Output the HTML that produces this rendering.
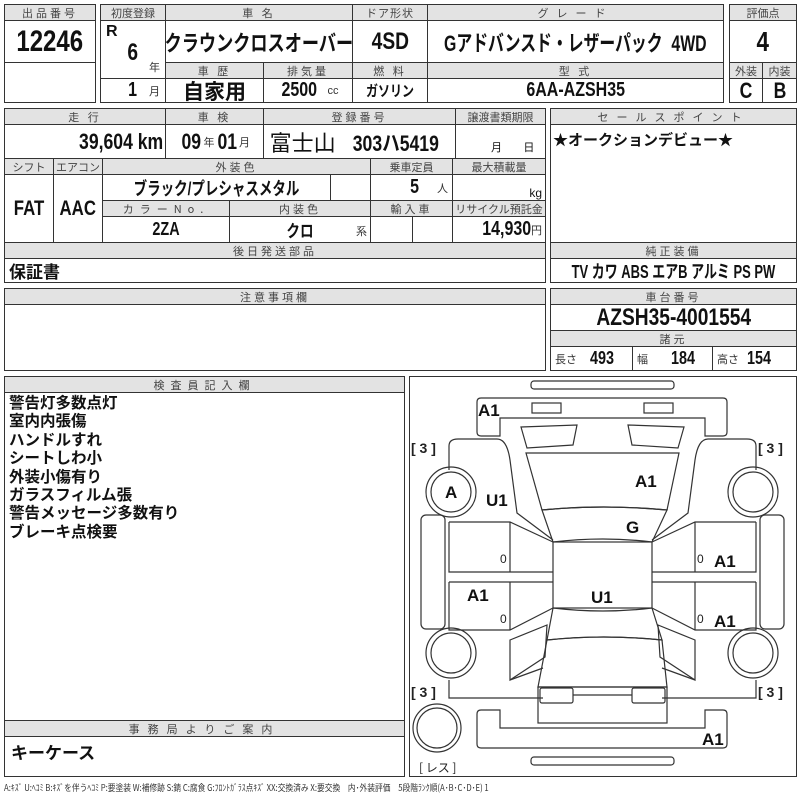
<!DOCTYPE html>
<html><head><meta charset="utf-8"><style>
*{box-sizing:border-box;margin:0;padding:0}
body{width:800px;height:800px;background:#fff;position:relative;overflow:hidden;font-family:"Liberation Sans","Noto Sans CJK JP",sans-serif;color:#111}
.c,.h{position:absolute;border:1px solid #333;display:flex;align-items:center;justify-content:center;white-space:nowrap;overflow:hidden}
.h{background:#e3e3e3;font-size:11px;color:#444;letter-spacing:3px;font-family:"Noto Sans CJK JP",sans-serif}
.b{font-weight:bold;font-family:"Liberation Sans","Noto Sans CJK JP",sans-serif}
.n{display:inline-block;transform:scaleX(.8)}
.s{font-size:11px;font-weight:normal;color:#333}
</style></head><body>

<div class="h" style="left:4px;top:4px;width:92px;height:17px">出品番号</div>
<div class="c b" style="left:4px;top:20px;width:92px;height:43px;font-size:30px"><span class="n">12246</span></div>
<div class="c" style="left:4px;top:62px;width:92px;height:41px"></div>

<div class="h" style="left:100px;top:4px;width:66px;height:17px;letter-spacing:0">初度登録</div>
<div class="h" style="left:165px;top:4px;width:188px;height:17px">車 名</div>
<div class="h" style="left:352px;top:4px;width:76px;height:17px;letter-spacing:1px">ドア形状</div>
<div class="h" style="left:427px;top:4px;width:297px;height:17px;letter-spacing:8px">グレード</div>
<div class="c b" style="left:100px;top:20px;width:66px;height:59px;font-size:24px"><span style="position:absolute;left:5px;top:2px;font-size:16px">R</span><span class="n" style="margin-top:6px">6</span><span class="s" style="position:absolute;right:5px;bottom:3px">年</span></div>
<div class="c b" style="left:165px;top:20px;width:188px;height:43px;font-size:22px"><span class="n" style="transform:scaleX(.78)">クラウンクロスオーバー</span></div>
<div class="c b" style="left:352px;top:20px;width:76px;height:43px;font-size:24px"><span class="n">4SD</span></div>
<div class="c b" style="left:427px;top:20px;width:297px;height:43px;font-size:22px"><span class="n" style="transform:scaleX(.72)">Gアドバンスド・レザーパック&nbsp; 4WD</span></div>
<div class="h" style="left:165px;top:62px;width:99px;height:17px">車 歴</div>
<div class="h" style="left:263px;top:62px;width:90px;height:17px">排気量</div>
<div class="h" style="left:352px;top:62px;width:76px;height:17px">燃 料</div>
<div class="h" style="left:427px;top:62px;width:297px;height:17px">型 式</div>
<div class="c b" style="left:100px;top:78px;width:66px;height:25px;font-size:20px;justify-content:flex-end;padding-right:5px"><span class="n">1</span>&nbsp;&nbsp;<span class="s">月</span></div>
<div class="c b" style="left:165px;top:78px;width:99px;height:25px;font-size:21px">自家用</div>
<div class="c b" style="left:263px;top:78px;width:90px;height:25px;font-size:20px"><span class="n">2500</span>&nbsp;<span class="s">cc</span></div>
<div class="c b" style="left:352px;top:78px;width:76px;height:25px;font-size:15px"><span class="n">ガソリン</span></div>
<div class="c b" style="left:427px;top:78px;width:297px;height:25px;font-size:20px"><span class="n">6AA-AZSH35</span></div>

<div class="h" style="left:729px;top:4px;width:68px;height:17px;letter-spacing:0">評価点</div>
<div class="c b" style="left:729px;top:20px;width:68px;height:43px;font-size:28px"><span class="n">4</span></div>
<div class="h" style="left:729px;top:62px;width:34px;height:17px;letter-spacing:0">外装</div>
<div class="h" style="left:762px;top:62px;width:35px;height:17px;letter-spacing:0">内装</div>
<div class="c b" style="left:729px;top:78px;width:34px;height:25px;font-size:22px"><span class="n">C</span></div>
<div class="c b" style="left:762px;top:78px;width:35px;height:25px;font-size:22px"><span class="n">B</span></div>

<div class="h" style="left:4px;top:108px;width:162px;height:17px">走 行</div>
<div class="h" style="left:165px;top:108px;width:99px;height:17px">車 検</div>
<div class="h" style="left:263px;top:108px;width:193px;height:17px">登録番号</div>
<div class="h" style="left:455px;top:108px;width:91px;height:17px;letter-spacing:0">譲渡書類期限</div>
<div class="c b" style="left:4px;top:124px;width:162px;height:35px;font-size:22px;justify-content:flex-end;padding-right:2px"><span class="n" style="transform-origin:right">39,604 km</span></div>
<div class="c b" style="left:165px;top:124px;width:99px;height:35px;font-size:22px"><span class="n">09</span><span class="s">年</span><span class="n">01</span><span class="s">月</span></div>
<div class="c b" style="left:263px;top:124px;width:193px;height:35px;font-size:22px"><span style="font-weight:normal">富士山</span>&nbsp;<span class="n">303ハ5419</span></div>
<div class="c" style="left:455px;top:124px;width:91px;height:35px;font-size:11px;align-items:flex-end;padding-bottom:3px;justify-content:space-around">&nbsp;<span>月</span><span>日</span></div>

<div class="h" style="left:4px;top:158px;width:50px;height:17px;letter-spacing:0">シフト</div>
<div class="h" style="left:53px;top:158px;width:50px;height:17px;letter-spacing:0">エアコン</div>
<div class="h" style="left:102px;top:158px;width:269px;height:17px">外装色</div>
<div class="h" style="left:370px;top:158px;width:83px;height:17px;letter-spacing:0">乗車定員</div>
<div class="h" style="left:452px;top:158px;width:94px;height:17px;letter-spacing:0">最大積載量</div>
<div class="c b" style="left:4px;top:174px;width:50px;height:69px;font-size:21px"><span class="n">FAT</span></div>
<div class="c b" style="left:53px;top:174px;width:50px;height:69px;font-size:21px"><span class="n">AAC</span></div>
<div class="c b" style="left:102px;top:174px;width:229px;height:27px;font-size:18px"><span class="n" style="transform:scaleX(.75)">ブラック/プレシャスメタル</span></div>
<div class="c" style="left:330px;top:174px;width:41px;height:27px"></div>
<div class="c b" style="left:370px;top:174px;width:83px;height:27px;font-size:20px;justify-content:flex-end;padding-right:4px"><span class="n">5</span>&nbsp;&nbsp;&nbsp;<span class="s">人</span></div>
<div class="c" style="left:452px;top:174px;width:94px;height:27px;font-size:12px;justify-content:flex-end;padding-right:3px;align-items:flex-end">kg</div>
<div class="h" style="left:102px;top:200px;width:128px;height:17px;letter-spacing:6px">カラーNo.</div>
<div class="h" style="left:229px;top:200px;width:142px;height:17px">内装色</div>
<div class="h" style="left:370px;top:200px;width:83px;height:17px">輸入車</div>
<div class="h" style="left:452px;top:200px;width:94px;height:17px;letter-spacing:0">リサイクル預託金</div>
<div class="c b" style="left:102px;top:216px;width:128px;height:27px;font-size:18px"><span class="n">2ZA</span></div>
<div class="c b" style="left:229px;top:216px;width:142px;height:27px;font-size:17px"><span class="n">クロ</span><span class="s" style="position:absolute;right:3px;bottom:3px">系</span></div>
<div class="c" style="left:370px;top:216px;width:43px;height:27px"></div>
<div class="c" style="left:412px;top:216px;width:41px;height:27px"></div>
<div class="c b" style="left:452px;top:216px;width:94px;height:27px;font-size:20px;justify-content:flex-end;padding-right:3px"><span class="n" style="transform-origin:right">14,930</span><span class="s">円</span></div>

<div class="h" style="left:4px;top:242px;width:542px;height:17px">後日発送部品</div>
<div class="c b" style="left:4px;top:258px;width:542px;height:25px;font-size:17px;justify-content:flex-start;padding-left:4px">保証書</div>

<div class="h" style="left:550px;top:108px;width:247px;height:17px;letter-spacing:8px">セールスポイント</div>
<div class="c b" style="left:550px;top:124px;width:247px;height:119px;font-size:15px;align-items:flex-start;justify-content:flex-start;padding:4px 2px">★オークションデビュー★</div>
<div class="h" style="left:550px;top:242px;width:247px;height:17px">純正装備</div>
<div class="c b" style="left:550px;top:258px;width:247px;height:25px;font-size:18px"><span class="n" style="transform:scaleX(.72)">TV カワ ABS エアB アルミ PS PW</span></div>

<div class="h" style="left:4px;top:288px;width:542px;height:17px">注意事項欄</div>
<div class="c" style="left:4px;top:304px;width:542px;height:67px"></div>
<div class="h" style="left:550px;top:288px;width:247px;height:17px">車台番号</div>
<div class="c b" style="left:550px;top:304px;width:247px;height:27px;font-size:24px"><span class="n">AZSH35-4001554</span></div>
<div class="h" style="left:550px;top:330px;width:247px;height:17px">諸元</div>
<div class="c b" style="left:550px;top:346px;width:83px;height:25px;font-size:18px;justify-content:flex-start;padding-left:4px"><span class="s">長さ</span>&nbsp;&nbsp;<span class="n">493</span></div>
<div class="c b" style="left:632px;top:346px;width:81px;height:25px;font-size:18px;justify-content:flex-start;padding-left:4px"><span class="s">幅</span>&nbsp;&nbsp;&nbsp;&nbsp;<span class="n">184</span></div>
<div class="c b" style="left:712px;top:346px;width:85px;height:25px;font-size:18px;justify-content:flex-start;padding-left:4px"><span class="s">高さ</span>&nbsp;<span class="n">154</span></div>

<div class="h" style="left:4px;top:376px;width:401px;height:17px;letter-spacing:6px">検査員記入欄</div>
<div class="c b" style="left:4px;top:392px;width:401px;height:329px;font-size:15.5px;line-height:18.4px;align-items:flex-start;justify-content:flex-start;padding:2px 4px;white-space:pre">警告灯多数点灯
室内内張傷
ハンドルすれ
シートしわ小
外装小傷有り
ガラスフィルム張
警告メッセージ多数有り
ブレーキ点検要</div>
<div class="h" style="left:4px;top:720px;width:401px;height:17px;letter-spacing:8px">事務局よりご案内</div>
<div class="c b" style="left:4px;top:736px;width:401px;height:41px;font-size:17px;align-items:flex-start;justify-content:flex-start;padding:2px 6px">キーケース</div>

<div class="c" style="left:409px;top:376px;width:388px;height:401px"></div>
<svg style="position:absolute;left:0;top:0" width="800" height="800" fill="none" stroke="#333" stroke-width="1.2">
<rect x="531" y="381" width="143" height="8" rx="3"/>
<path d="M500 436 L481 436 Q477 436 477 432 L477 402 Q477 398 481 398 L723 398 Q727 398 727 402 L727 432 Q727 436 723 436 L705 436 L705 418 L500 418 Z"/>
<rect x="532" y="403" width="29" height="10"/><rect x="644" y="403" width="29" height="10"/>
<path d="M521 427 L577 425 L573 445 L527 448 Z"/><path d="M684 427 L628 425 L632 445 L678 448 Z"/>
<path d="M526 453 L679 453 L667 510 Q603 504 542 510 Z"/>
<path d="M542 510 Q603 504 667 510 L652 542 Q603 536 553 542 Z"/>
<rect x="553" y="542" width="99" height="66"/>
<path d="M553 608 Q603 614 652 608 L662 640 Q603 634 547 640 Z"/>
<path d="M547 640 Q603 634 662 640 L667 687 L538 687 Z"/>
<rect x="538" y="687" width="129" height="36"/>
<rect x="540" y="688" width="33" height="15" rx="2"/><rect x="632" y="688" width="33" height="15" rx="2"/>
<line x1="573" y1="695" x2="632" y2="695"/>
<path d="M500 710 L500 728 L705 728 L705 710 L723 710 Q727 710 727 714 L727 744 Q727 748 723 748 L481 748 Q477 748 477 744 L477 714 Q477 710 481 710 Z"/>
<rect x="531" y="757" width="143" height="8" rx="3"/>
<path d="M449 470 L449 446 Q449 439 458 439 L497 439 Q507 439 510 460 L517 513 L553 540"/>
<path d="M756 470 L756 446 Q756 439 747 439 L708 439 Q698 439 695 460 L688 513 L652 540"/>
<path d="M449 522 L510 522 L553 542 M449 522 L449 572 L553 572 M510 522 L510 572"/>
<path d="M756 522 L695 522 L652 542 M756 522 L756 572 L652 572 M695 522 L695 572"/>
<path d="M449 582 L553 582 M449 582 L449 630 L510 630 L553 608 M510 582 L510 630"/>
<path d="M756 582 L652 582 M756 582 L756 630 L695 630 L652 608 M695 582 L695 630"/>
<path d="M510 640 L547 625 L545 657 L510 680 Z"/><path d="M695 640 L658 625 L660 657 L695 680 Z"/>
<path d="M449 680 L449 698 L543 698 M510 680 L543 668"/><path d="M756 680 L756 698 L662 698 M695 680 L662 668"/>
<rect x="421" y="515" width="24" height="114" rx="5"/><rect x="760" y="515" width="24" height="114" rx="5"/>
<circle cx="451" cy="492" r="25"/><circle cx="451" cy="492" r="20"/>
<circle cx="753" cy="492" r="25"/><circle cx="753" cy="492" r="20"/>
<circle cx="451" cy="653" r="25"/><circle cx="451" cy="653" r="20"/>
<circle cx="753" cy="653" r="25"/><circle cx="753" cy="653" r="20"/>
<circle cx="437" cy="728" r="24"/><circle cx="437" cy="728" r="20"/>
<g fill="#111" stroke="none" font-family="Liberation Sans,sans-serif" font-weight="bold" font-size="17">
<text x="478" y="416">A1</text><text x="635" y="487">A1</text><text x="486" y="506">U1</text>
<text x="445" y="498">A</text><text x="626" y="533">G</text>
<text x="467" y="601">A1</text><text x="591" y="603">U1</text>
<text x="714" y="567">A1</text><text x="714" y="627">A1</text><text x="702" y="745">A1</text>
</g>
<g fill="#222" stroke="none" font-family="Liberation Sans,sans-serif" font-size="14">
<text x="500" y="563" font-size="12">0</text><text x="500" y="623" font-size="12">0</text>
<text x="697" y="563" font-size="12">0</text><text x="697" y="623" font-size="12">0</text>
<text x="411" y="453" font-weight="bold">[&#160;3&#160;]</text><text x="758" y="453" font-weight="bold">[&#160;3&#160;]</text>
<text x="411" y="697" font-weight="bold">[&#160;3&#160;]</text><text x="758" y="697" font-weight="bold">[&#160;3&#160;]</text>
<text x="419" y="772" font-family="Noto Sans CJK JP,sans-serif" font-size="12">[ レス ]</text>
</g>
</svg>
<div style="position:absolute;left:4px;top:781px;font-size:9px;color:#333;white-space:nowrap;font-family:'Noto Sans CJK JP',sans-serif;transform:scaleX(.86);transform-origin:left">A:ｷｽﾞ U:ﾍｺﾐ B:ｷｽﾞを伴うﾍｺﾐ P:要塗装 W:補修跡 S:錆 C:腐食 G:ﾌﾛﾝﾄｶﾞﾗｽ点ｷｽﾞ XX:交換済み X:要交換　内･外装評価　5段階ﾗﾝｸ順(A･B･C･D･E) 1</div>
</body></html>
